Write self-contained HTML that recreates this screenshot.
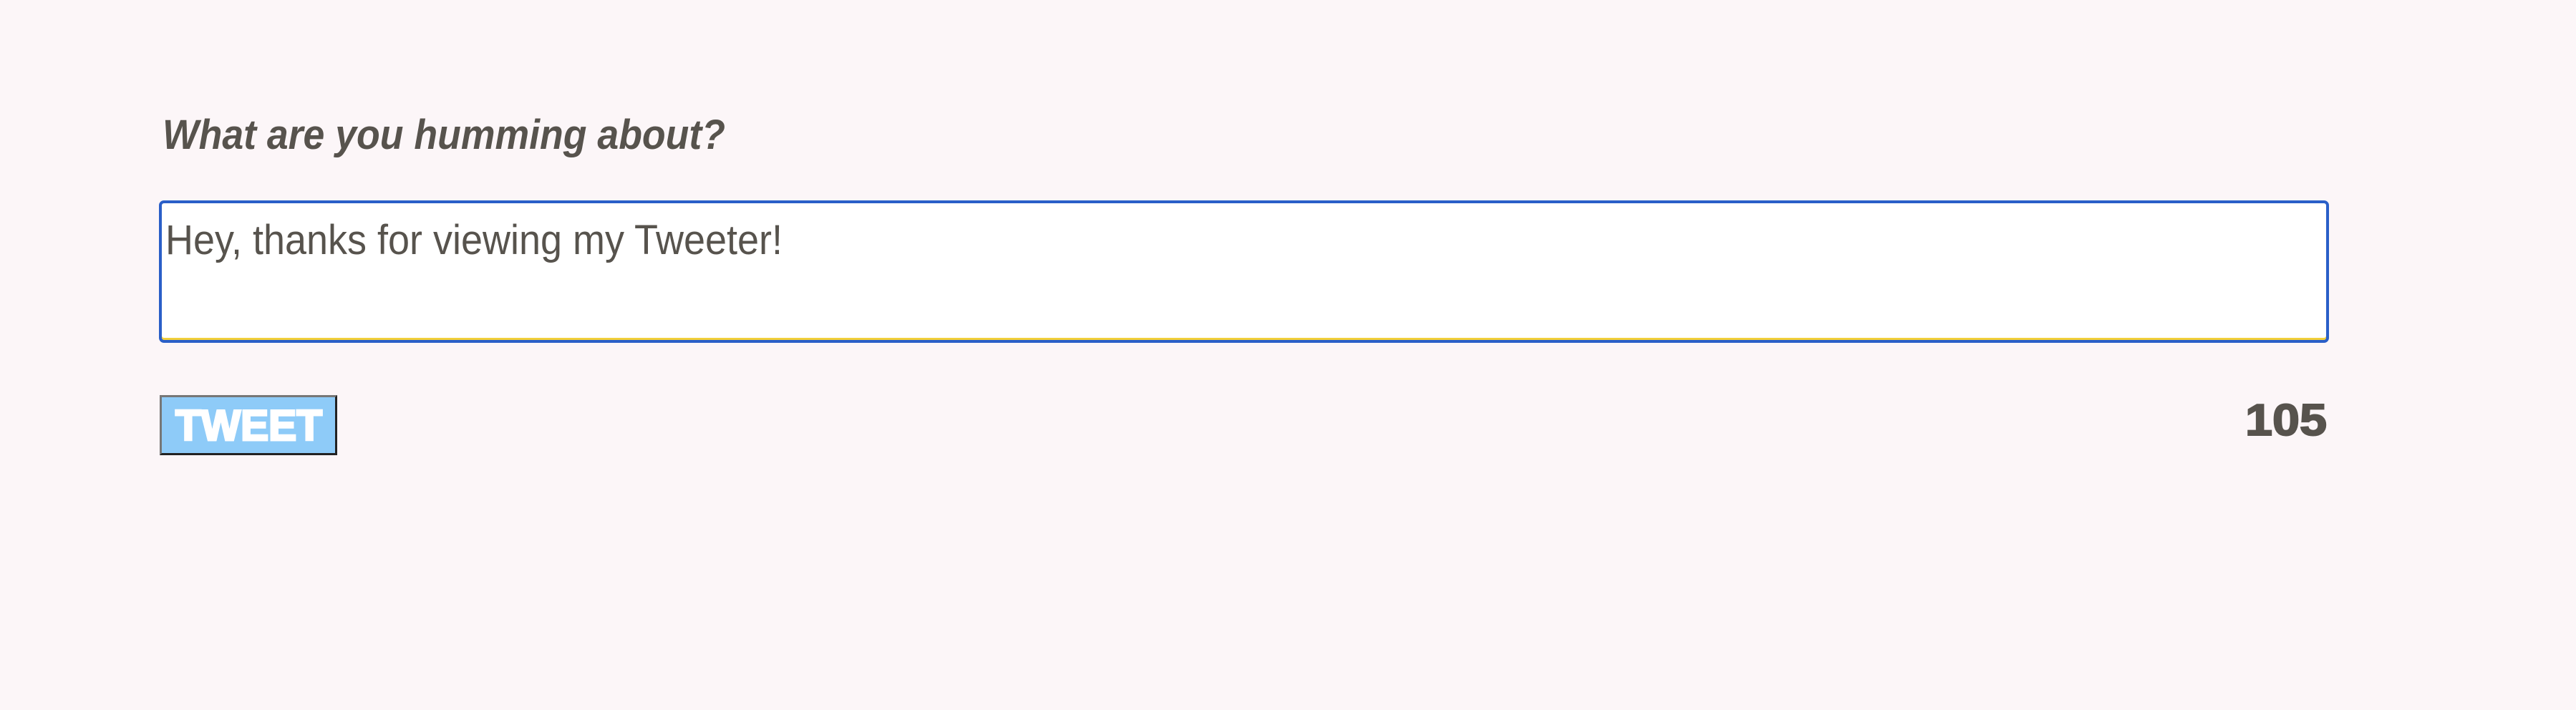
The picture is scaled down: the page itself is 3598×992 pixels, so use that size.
<!DOCTYPE html>
<html><head><meta charset="utf-8"><style>
html,body{margin:0;padding:0;background:#fcf6f8;width:3598px;height:992px;overflow:hidden}
.ta{position:absolute;left:222px;top:280px;width:3031px;height:199px;box-sizing:border-box;background:#fff;border:4px solid #2a5fc8;border-radius:7px;box-shadow:inset 0 -3px 0 #f2cf3a}
.btn{position:absolute;left:223px;top:552px;width:248px;height:84px;box-sizing:border-box;background:#8ecbf8;border:3px solid;border-color:#777 #222 #222 #777}
svg{position:absolute;left:0;top:0}
</style></head><body>
<div class="ta"></div>
<div class="btn"></div>
<svg width="3598" height="992" font-family="Liberation Sans, sans-serif">
<text x="227" y="208" font-size="58" font-weight="bold" font-style="italic" fill="#57534d" textLength="786" lengthAdjust="spacingAndGlyphs">What are you humming about?</text>
<text x="231" y="355" font-size="58" fill="#57534d" textLength="862" lengthAdjust="spacingAndGlyphs">Hey, thanks for viewing my Tweeter!</text>
<text x="245" y="615" font-size="60" font-weight="bold" fill="#fff" stroke="#fff" stroke-width="3" textLength="205" lengthAdjust="spacingAndGlyphs">TWEET</text>
<text x="3136" y="608" font-size="62" font-weight="bold" fill="#57534d" stroke="#57534d" stroke-width="2" textLength="114" lengthAdjust="spacingAndGlyphs">105</text>
</svg>
</body></html>
